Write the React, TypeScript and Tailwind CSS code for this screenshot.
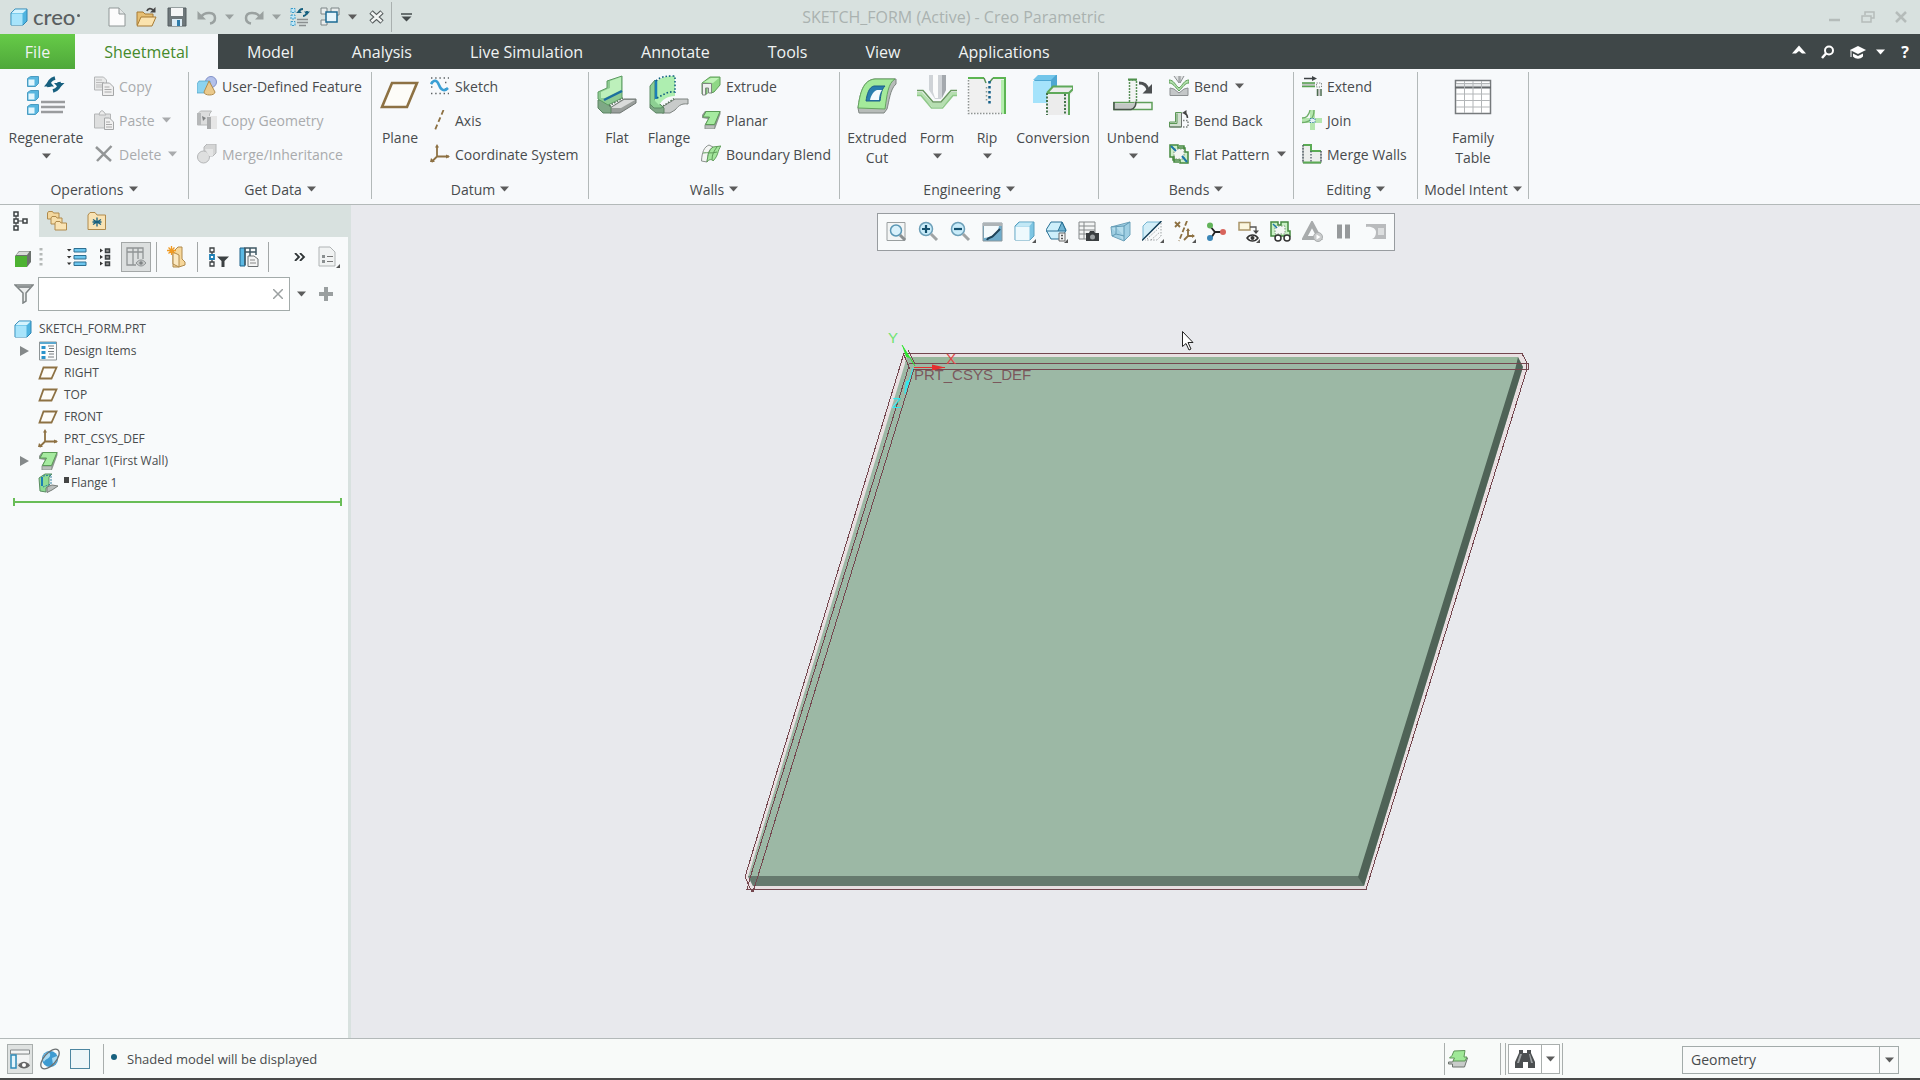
import React from 'react';

type IconProps = { className?: string };

const Svg: React.FC<{ w: number; h?: number; className?: string; children: React.ReactNode }> = ({ w, h = w, className = '', children }) => (
  <svg width={w} height={h} viewBox={`0 0 ${w} ${h}`} className={`shrink-0 ${className}`} fill="none" aria-hidden="true">
    {children}
  </svg>
);

const Caret: React.FC<IconProps> = ({ className = 'text-[#5c5c5c]' }) => (
  <Svg w={9} h={6} className={className}>
    <path d="M0 0.500h9L4.500 5.500z" fill="currentColor" />
  </Svg>
);

/* ---------- Shared shapes ---------- */

const CubeIcon: React.FC = () => (
  <Svg w={18}>
    <path d="M1 5l4-4h12v12l-4 4H1z" fill="#4fb4e0" stroke="#2e86b4" />
    <path d="M1.500 5.500h11V17h-11z" fill="#a8e4fb" />
    <path d="M1.500 5L5 1.500h11.500L13 5z" fill="#d5f3fd" />
  </Svg>
);

const PlaneIcon: React.FC = () => (
  <Svg w={20}>
    <path d="M5.500 4.500h13l-5 11h-12z" fill="#fdfcf8" stroke="#8d7143" strokeWidth="1.800" />
  </Svg>
);

const CsysIcon: React.FC = () => (
  <Svg w={20}>
    <path d="M7 2v10.500h12M7 12.500L1.500 18" stroke="#8d7143" strokeWidth="1.800" />
    <path d="M5 3.500L7 0l2 3.500zM16 10.500l4 2-4 2zM1 14l4 4H0z" fill="#8d7143" />
  </Svg>
);

const PlanarIcon: React.FC = () => (
  <Svg w={20}>
    <path d="M1 8V5l3-4h15.500v3L14 19H3.500v-4L7 9z" fill="#8d9690" />
    <path d="M2 7l3-5.500h14L13.500 14.500h-9L8.500 7z" fill="#a6eba0" stroke="#5a9c56" />
    <path d="M4.500 15.500h9l-.5 3H4.500z" fill="#babfbb" />
  </Svg>
);

const FlangeSmallIcon: React.FC = () => (
  <Svg w={20}>
    <path d="M1 5l6-4h7l-3 3v9l-3 2v4L2 18z" fill="#8fdc95" stroke="#5a8d62" />
    <path d="M4 4v9" stroke="#1d7fb5" strokeWidth="2" />
    <path d="M5 3l8-1v9l-8 3" stroke="#2e7f9d" strokeDasharray="2 1" />
    <path d="M9 14l5-2 6 1-6 4-5 2.500z" fill="#b9bdbb" stroke="#777d79" />
  </Svg>
);

/* ---------- Title bar icons ---------- */

const NewIcon = () => (
  <Svg w={18} h={20}>
    <path d="M1 1h10l6 6v12H1z" fill="#fcfcfc" stroke="#8f9696" />
    <path d="M11 1v6h6" fill="#e4e7e7" stroke="#8f9696" />
  </Svg>
);

const OpenIcon = () => (
  <Svg w={21} h={20}>
    <path d="M1 18V5h6l2 2h8v4" fill="#e6bf73" stroke="#a77b34" />
    <path d="M1 19l4-9h15l-4 9z" fill="#fbe3ae" stroke="#a77b34" />
    <path d="M11 4c1-3 4-3 6-1" stroke="#444" strokeWidth="1.800" />
    <path d="M19.500 0v5.500H14z" fill="#444" />
  </Svg>
);

const SaveIcon = () => (
  <Svg w={20}>
    <path d="M1 1h18v18H1z" fill="#6f787b" stroke="#555d60" />
    <path d="M4 1h12v8H4z" fill="#f5f6f6" />
    <path d="M5 12h10v7H5z" fill="#dcecf5" />
    <path d="M10 13h3v6h-3z" fill="#2f7dab" />
  </Svg>
);

const UndoIcon: React.FC<{ flip?: boolean }> = ({ flip }) => (
  <Svg w={20} h={16} className={flip ? '-scale-x-100' : ''}>
    <path d="M4 8c4-6 14-5 14 1 0 3-2 5-5 5.500" stroke="#9aa1a0" strokeWidth="2.500" />
    <path d="M0.500 2v8.500H9z" fill="#9aa1a0" />
  </Svg>
);

const RegenSmallIcon = () => (
  <Svg w={20}>
    <path d="M1 1.500h4v4H1zM1 8h4v4H1zM1 14.500h4v4H1z" fill="#bfe8fa" stroke="#3d9cc8" strokeDasharray="2 1" />
    <path d="M9 6c0-3 2-4 4-4M17 4c0 3-2 5-4 5" stroke="#17607f" strokeWidth="2" />
    <path d="M6 6h6L9 3zM14 4.500h6l-3 3.500z" fill="#17607f" />
    <path d="M7 12.500h11M7 15.500h11M9 18.500h7" stroke="#8a8f90" strokeWidth="1.500" />
  </Svg>
);

const WindowsIcon = () => (
  <Svg w={20}>
    <path d="M1 1h6v6H1zM11 1h8v7h-8zM1 13h6v5H1z" fill="#e9eded" stroke="#7d8586" />
    <path d="M6 5h11v10H6z" fill="#e6f5fc" stroke="#1b6a93" strokeWidth="1.500" />
  </Svg>
);

/* ---------- Large ribbon icons ---------- */

const RegenerateIcon = () => (
  <Svg w={40}>
    {[0, 14, 28].map((y) => (
      <g key={y}>
        <path d={`M1.500 ${y + 3.500}l3-2h8v7l-3 3h-8z`} fill="#58b6df" stroke="#4a9cc2" />
        <path d={`M2.500 ${y + 4.500}h6v6h-6z`} fill="#e3f6fd" />
      </g>
    ))}
    <path d="M23 12c-1-5 2-8 6-9M33 7c1 5-2 8-6 9" stroke="#17607f" strokeWidth="3.500" />
    <path d="M18 11.500h10l-5-6zM28 8h10.500L33 13.500z" fill="#17607f" />
    <path d="M15 27h24M15 32h24M15 37h22" stroke="#9a9c9e" strokeWidth="2.500" />
  </Svg>
);

const PlaneLargeIcon = () => (
  <Svg w={40}>
    <path d="M12 8h25L27 32H2z" fill="#fdfcf8" stroke="#8d7143" strokeWidth="2.600" />
  </Svg>
);

const FlatIcon = () => (
  <Svg w={40}>
    <path d="M13 33l14-9h12v4L23 38H13z" fill="#9a9f9c" stroke="#6f7672" />
    <path d="M14 33l13-8h11l-14 8z" fill="#d9dbda" />
    <path d="M1 25h9l4 7v6H6l-5-5z" fill="#7fa886" stroke="#5c8463" />
    <path d="M1 24v-7l9-4V6l15-5v22L11 30z" fill="#8ecb92" stroke="#5d9b62" />
    <path d="M4 23v-6l9-4V6l11-4v13L8 23z" fill="#bdf0bb" />
    <path d="M7 25l18-9" stroke="#1b6fa0" strokeWidth="2.500" />
    <path d="M12 31l14-8" stroke="#58755d" strokeDasharray="1.500 1.500" strokeWidth="1.500" />
  </Svg>
);

const FlangeIcon = () => (
  <Svg w={40}>
    <path d="M13 32l10-6 3-2h13v5c-8-1-10 3-13 6l-5 3h-8z" fill="#c8cbca" stroke="#7d8380" />
    <path d="M1 29h10l4 4v5H7l-6-5z" fill="#7fa886" stroke="#5c8463" />
    <path d="M1 29V11l5-6v20l8 7-2 1H5z" fill="#8dcf92" stroke="#5d8d64" />
    <path d="M6 8C11 2 18 1 26 1v20c-8 0-13 4-16 9l-4-4z" fill="#aeeeb0" />
    <path d="M7 5v19" stroke="#1b7fb8" strokeWidth="2.500" />
    <path d="M7 6C12 1 18 1 26 1v16c-7-1-12 3-18 6" stroke="#136181" strokeWidth="1.600" strokeDasharray="1.600 2" />
    <path d="M14 31l12-8" stroke="#58755d" strokeDasharray="1.500 1.500" strokeWidth="1.500" />
  </Svg>
);

const ExtrudedCutIcon = () => (
  <Svg w={40}>
    <path d="M1 33C3 18 6 5 18 4h21v5C33 14 32 27 30 34l-3 4H2z" fill="#b7bcb9" stroke="#7f8682" />
    <path d="M1 33C3 18 6 5 18 4h20C31 8 30 20 28 34z" fill="#a4ea9b" stroke="#64a45f" />
    <path d="M9 26c1-7 3-14 8-15h11c-4 4-4 9-5 15z" fill="#2a7ead" stroke="#1c5f87" />
    <path d="M13 25c1-5 4-9 7-10h5c-2 3-3 6-3 10z" fill="#f5fafc" />
  </Svg>
);

const FormIcon = () => (
  <Svg w={40}>
    <path d="M12 0h17v15l-5 9h-6l-6-9z" fill="#cfd3d7" />
    <path d="M16 0h5v23h-3l-2-6z" fill="#fbfcfc" />
    <path d="M25 0h4v15l-4 8z" fill="#a4a9ae" />
    <path d="M0 17h5l11 11h8l10-11h6v4h-4L25 32H15L4 21H0z" fill="#b6dfb1" />
    <path d="M0 15.500h6L16 27h8l10-11.500h6" stroke="#69985f" strokeWidth="1.500" />
    <path d="M0 20.500h4L14.500 33h11L36 20.500h4" stroke="#8fc989" strokeWidth="1.500" />
  </Svg>
);

const RipIcon = () => (
  <Svg w={40}>
    <path d="M2 4h16l3 6 4-6h13v34H2z" fill="#f0f0f0" />
    <path d="M1 3h16M26 3h12v36" stroke="#5cb552" strokeWidth="2" />
    <path d="M35.500 5v34" stroke="#b5eeae" strokeWidth="3" />
    <path d="M1.500 5v33.500H35" stroke="#8f9492" strokeDasharray="1.500 1.500" strokeWidth="1.500" />
    <path d="M17 3l2 5M26 3l-4 5" stroke="#5a9058" strokeWidth="1.500" />
    <path d="M22.500 6v24" stroke="#135f88" strokeWidth="2.500" strokeDasharray="2.500 2.500" />
    <path d="M19.500 12v15" stroke="#8a9a90" strokeWidth="1.500" strokeDasharray="1.500 2.500" />
  </Svg>
);

const ConversionIcon = () => (
  <Svg w={40}>
    <path d="M0 7l6-7h18v22l-6 6H0z" fill="#4ea7d2" />
    <path d="M0 6h18v22H0z" fill="#a5e3fb" />
    <path d="M0 5l5-5h18l-5 5z" fill="#73c6ea" />
    <path d="M14 18l6-7h20v6l-4 4v19H14z" fill="#ececec" />
    <path d="M14 18h22M14 18l6-6.500h20M40 11v3l-4 4" stroke="#5fa95a" strokeWidth="2" />
    <path d="M14 18v22M32 19v21" stroke="#44734a" strokeWidth="2" strokeDasharray="2 1.500" />
    <path d="M36 18v22" stroke="#5fa95a" strokeWidth="2" />
  </Svg>
);

const UnbendIcon = () => (
  <Svg w={40}>
    <path d="M1 27.500h38v7H1z" fill="#f3f5f4" stroke="#5f9f5a" strokeWidth="1.500" />
    <path d="M1 28.500h19l3-2-3 8H1z" fill="#c3c7c5" />
    <path d="M1 27v7.500h17c4-1 5-4 5-8" stroke="#465448" strokeWidth="1.500" />
    <path d="M16.500 27V5h7v21" stroke="#5a9158" strokeWidth="1.500" strokeDasharray="2 1" fill="#f3f4f4" />
    <path d="M15 4.500h9" stroke="#4f914c" strokeWidth="2" />
    <path d="M26 8c5 0 8 2 9 7" stroke="#4d5052" strokeWidth="3" />
    <path d="M29.500 18.500h9.500V9z" fill="#4d5052" />
  </Svg>
);

const FamilyTableIcon = () => (
  <Svg w={40}>
    <path d="M2.500 5.500h35v33h-35z" fill="#fff" stroke="#767a7c" strokeWidth="1.500" />
    <path d="M3 9h34v3H3z" fill="#e7e9ea" />
    <path d="M2 12.500h36" stroke="#65696b" strokeWidth="2" />
    <path d="M3 8.500h34M11.500 6v32M20 6v32M28.500 6v32M3 19h34M3 25.500h34M3 32h34" stroke="#b3b6b8" />
  </Svg>
);

/* ---------- Small ribbon icons ---------- */

const CopyIcon = () => (
  <Svg w={20}>
    <path d="M0.500 1h9l3 3v10h-12z" fill="#e9eaea" stroke="#b4b6b7" />
    <path d="M2 4h6M2 6.500h8M2 9h6M2 11h6" stroke="#bbb" />
    <path d="M8.500 7h7l4 4v8.500h-11z" fill="#efefef" stroke="#a5a7a8" />
    <path d="M10.500 11h5M10.500 13.500h7M10.500 16h7" stroke="#aaa" />
  </Svg>
);

const PasteIcon = () => (
  <Svg w={20}>
    <path d="M0.500 4h16v14h-16z" fill="#dedfdf" stroke="#b4b6b7" />
    <path d="M5 5l1-3 2-1.500L10 2l2 3z" fill="#ececec" stroke="#b4b6b7" />
    <path d="M10.500 8h5l4 4v7.500h-9z" fill="#f1f1f1" stroke="#a5a7a8" />
    <path d="M12 12h4M12 14.500h6M12 17h6" stroke="#aaa" />
  </Svg>
);

const DeleteIcon = () => (
  <Svg w={20}>
    <path d="M2 3l15 14M17.500 2L3 17" stroke="#939697" strokeWidth="2.500" />
  </Svg>
);

const UdfIcon = () => (
  <Svg w={20}>
    <circle cx="14" cy="6" r="5.500" fill="#b3c1ea" stroke="#8090c8" />
    <path d="M0 8l2-3h11v9l-2 3H0z" fill="#8cd3ef" stroke="#4ca0c4" strokeWidth=".7" />
    <path d="M12 5l6 11c0 4-11 4-11 0z" fill="#eac98b" stroke="#b28d4e" />
  </Svg>
);

const CopyGeomIcon = () => (
  <Svg w={20}>
    <path d="M0.500 4l3-3h11l-2 3v11h-12z" fill="#dcdddd" stroke="#b6b8b8" />
    <path d="M0 3h4v12H0z" fill="#b6b8b9" />
    <path d="M5 6l4 2-3 3z" fill="#7f8283" />
    <path d="M10 8l2-2h8v13h-9z" fill="#e6e6e6" />
    <path d="M10 7h4v12h-4z" fill="#a9abac" />
  </Svg>
);

const MergeIcon = () => (
  <Svg w={20}>
    <path d="M7 3l3-3h9v9l-3 3H7z" fill="#d4d5d5" stroke="#b4b6b7" />
    <circle cx="6.500" cy="13" r="6" fill="#dedfdf" stroke="#b4b6b7" />
    <path d="M8 5h8v7h-4z" fill="#e4e5e5" />
  </Svg>
);

const SketchIcon = () => (
  <Svg w={20}>
    <path d="M1 2h18M1 6.500h4M15 6.500h4M1 11h4M15 13h4M1 17.500h18" stroke="#5d6264" strokeWidth="1.400" strokeDasharray="1.400 2.800" />
    <path d="M1 8c3-5 6-4 8 1s5 7 9 3" stroke="#3a9fd4" strokeWidth="2.600" />
  </Svg>
);

const AxisIcon = () => (
  <Svg w={20}>
    <path d="M13.500 0L5 20" stroke="#8d7143" strokeWidth="1.800" strokeDasharray="5 3" />
  </Svg>
);

const ExtrudeIcon = () => (
  <Svg w={20}>
    <path d="M1 7l8-6h10v8l-6 7-3 1V10H6v8H1z" fill="#8fd886" stroke="#5f9c59" />
    <path d="M3 6l7-4h8l-6 5z" fill="#c0f3b8" />
    <path d="M1.500 7.500h9V17h-3v-5h-3v7h-3z" fill="#eef0ee" stroke="#7e8780" />
  </Svg>
);

const BlendIcon = () => (
  <Svg w={20}>
    <path d="M0.500 17C1 8 3 3 8 1l4 2c-5 3-5 8-6 15z" fill="#f4f6f4" stroke="#8b918d" />
    <path d="M6 18c1-8 2-12 6-15l8-1c-4 5-2 9-8 15-1-2-4-2-6 1z" fill="#a4e69d" stroke="#5f9c59" />
    <path d="M2 9c5-1 8 1 14-1M11 16c0-6 2-9 5-13" stroke="#5f9c59" />
  </Svg>
);

const BendIcon = () => (
  <Svg w={20}>
    <path d="M5 0l5 7V0M11 0v7l4-7" stroke="#8b8f91" fill="#dfe1e2" />
    <path d="M0 4c5 0 6 5 10 8 4-3 5-8 10-8v3c-4 0-6 4-10 8C6 11 4 7 0 7z" fill="#b2e2ad" stroke="#5d9c57" />
    <path d="M1 12l4 1 5 4 5-4 4-1v7.500H1z" fill="#c4c7c8" stroke="#8b8f91" />
  </Svg>
);

const BendBackIcon = () => (
  <Svg w={20}>
    <path d="M0.500 12h6V2.500h6V17h-12z" fill="#d3e0d2" stroke="#5c9857" />
    <path d="M0.500 13.500h7.500v-10" stroke="#5c9857" />
    <path d="M0.500 17h12V3" stroke="#696f6b" />
    <path d="M14 10.500h5V17h-5" stroke="#7b807d" strokeDasharray="1.500 1.500" strokeWidth="1.500" />
    <path d="M18.500 8c0-3-1-4-3-5" stroke="#444" strokeWidth="1.500" />
    <path d="M13 3l4.500-3v5z" fill="#444" />
  </Svg>
);

const FlatPatternIcon = () => (
  <Svg w={20}>
    <path d="M1 1h8v3h7v4h3v11h-8v-3H4v-3H1z" fill="#cdeeca" stroke="#44893f" strokeWidth="1.500" />
    <path d="M5 5h10v10H5z" fill="#f3f6f3" stroke="#789376" strokeDasharray="1.500 1.500" />
    <path d="M2 2l5 5M13 12l5 6" stroke="#1b76a8" strokeWidth="2" />
    <path d="M10 2h5v3M5 12v6h5" stroke="#44893f" strokeWidth="1.500" />
  </Svg>
);

const ExtendIcon = () => (
  <Svg w={20}>
    <path d="M2 2.500h10" stroke="#3e4345" strokeWidth="1.500" />
    <path d="M10 0l5 2.500L10 5z" fill="#3e4345" />
    <path d="M0 8.500h13" stroke="#bfc3c1" strokeWidth="4" />
    <path d="M0 7h13M0 10.500h13" stroke="#58a452" strokeWidth="1.300" />
    <path d="M14.500 7h5v4h-5z" stroke="#7b807d" strokeDasharray="1.300 1.300" />
    <path d="M15 13h3v7h-3z" fill="#ccc" />
    <path d="M15.500 13v7M19 13v7" stroke="#4e6c50" strokeWidth="1.500" />
  </Svg>
);

const JoinIcon = () => (
  <Svg w={20}>
    <path d="M0 10.500h20" stroke="#b4e6ae" strokeWidth="5" />
    <path d="M10.500 0v20" stroke="#b4e6ae" strokeWidth="5" />
    <path d="M0 12.500c7 0 12-4 12-12.500M0 8c4 0 7-3 8-8" stroke="#6fae69" strokeWidth="1.300" />
    <path d="M8 8.500h5v4H8z" fill="#e3f1f7" stroke="#3b7fa5" strokeDasharray="1.300 1.300" />
  </Svg>
);

const MergeWallsIcon = () => (
  <Svg w={20}>
    <path d="M1 1h8v6h10v12H1z" fill="#eceeec" stroke="#8b918d" />
    <path d="M1 1h8v6h10M1 18.500h18" stroke="#5bab54" strokeWidth="2" />
    <path d="M9 7v11M1 1v17M19 7v11" stroke="#4e5a66" strokeDasharray="1.500 1.500" strokeWidth="1.300" />
  </Svg>
);

/* ---------- Ribbon building blocks ---------- */

const BigButton: React.FC<{ icon: React.ReactNode; label: string; second?: string; menu?: boolean; width: string }> = ({ icon, label, second, menu, width }) => (
  <button type="button" className={`flex flex-col items-center pt-[6px] ${width}`}>
    {icon}
    <span className="mt-[13px] leading-5 whitespace-nowrap">{label}</span>
    {second && <span className="leading-5">{second}</span>}
    {menu && <span className="flex h-4 items-center"><Caret /></span>}
  </button>
);

type SmallItem = { icon: React.ReactNode; label: string; menu?: boolean; off?: boolean };

const SmallColumn: React.FC<{ items: SmallItem[]; className?: string }> = ({ items, className = '' }) => (
  <div className={`flex flex-col items-start ${className}`}>
    {items.map((item) => (
      <button
        key={item.label}
        type="button"
        disabled={item.off}
        className="flex h-[34px] items-center gap-[5px] whitespace-nowrap disabled:text-[#a9abad]"
      >
        {item.icon}
        <span>{item.label}</span>
        {item.menu && <Caret className={item.off ? 'ml-[2px] text-[#a9abad]' : 'ml-[2px] text-[#5c5c5c]'} />}
      </button>
    ))}
  </div>
);

const Group: React.FC<{ title: string; width: string; children: React.ReactNode }> = ({ title, width, children }) => (
  <section className={`flex shrink-0 flex-col ${width}`} aria-label={title}>
    <div className="flex h-[107px]">{children}</div>
    <button type="button" className="flex h-[26px] items-center justify-center gap-[5px] whitespace-nowrap">
      {title} <Caret />
    </button>
  </section>
);

const Rule: React.FC = () => <span className="my-[3px] w-px shrink-0 bg-[#b3b9b9]" />;

const Ribbon: React.FC = () => (
  <div className="flex border-b border-[#b3b9b9] bg-[#f7f9fb] pb-[2px]">
    <Group title="Operations" width="w-[188px]">
      <BigButton icon={<RegenerateIcon />} label="Regenerate" menu width="w-[92px]" />
      <SmallColumn
        className="pl-[2px]"
        items={[
          { icon: <CopyIcon />, label: 'Copy', off: true },
          { icon: <PasteIcon />, label: 'Paste', menu: true, off: true },
          { icon: <DeleteIcon />, label: 'Delete', menu: true, off: true },
        ]}
      />
    </Group>
    <Rule />
    <Group title="Get Data" width="w-[182px]">
      <SmallColumn
        className="pl-2"
        items={[
          { icon: <UdfIcon />, label: 'User-Defined Feature' },
          { icon: <CopyGeomIcon />, label: 'Copy Geometry', off: true },
          { icon: <MergeIcon />, label: 'Merge/Inheritance', off: true },
        ]}
      />
    </Group>
    <Rule />
    <Group title="Datum" width="w-[216px]">
      <BigButton icon={<PlaneLargeIcon />} label="Plane" width="w-[56px]" />
      <SmallColumn
        className="pl-[2px]"
        items={[
          { icon: <SketchIcon />, label: 'Sketch' },
          { icon: <AxisIcon />, label: 'Axis' },
          { icon: <CsysIcon />, label: 'Coordinate System' },
        ]}
      />
    </Group>
    <Rule />
    <Group title="Walls" width="w-[250px]">
      <BigButton icon={<FlatIcon />} label="Flat" width="w-[56px]" />
      <BigButton icon={<FlangeIcon />} label="Flange" width="w-[48px]" />
      <SmallColumn
        className="pl-2"
        items={[
          { icon: <ExtrudeIcon />, label: 'Extrude' },
          { icon: <PlanarIcon />, label: 'Planar' },
          { icon: <BlendIcon />, label: 'Boundary Blend' },
        ]}
      />
    </Group>
    <Rule />
    <Group title="Engineering" width="w-[258px]">
      <BigButton icon={<ExtrudedCutIcon />} label="Extruded" second="Cut" width="w-[74px]" />
      <BigButton icon={<FormIcon />} label="Form" menu width="w-[46px]" />
      <BigButton icon={<RipIcon />} label="Rip" menu width="w-[54px]" />
      <BigButton icon={<ConversionIcon />} label="Conversion" width="w-[78px]" />
    </Group>
    <Rule />
    <Group title="Bends" width="w-[194px]">
      <BigButton icon={<UnbendIcon />} label="Unbend" menu width="w-[68px]" />
      <SmallColumn
        className="pl-[2px]"
        items={[
          { icon: <BendIcon />, label: 'Bend', menu: true },
          { icon: <BendBackIcon />, label: 'Bend Back' },
          { icon: <FlatPatternIcon />, label: 'Flat Pattern', menu: true },
        ]}
      />
    </Group>
    <Rule />
    <Group title="Editing" width="w-[123px]">
      <SmallColumn
        className="pl-2"
        items={[
          { icon: <ExtendIcon />, label: 'Extend' },
          { icon: <JoinIcon />, label: 'Join' },
          { icon: <MergeWallsIcon />, label: 'Merge Walls' },
        ]}
      />
    </Group>
    <Rule />
    <Group title="Model Intent" width="w-[110px]">
      <BigButton icon={<FamilyTableIcon />} label="Family" second="Table" width="w-[110px]" />
    </Group>
    <Rule />
  </div>
);

/* ---------- Title bar and tabs ---------- */

const TitleBar: React.FC = () => (
  <header className="flex h-[34px] items-center bg-[#d8e1df]">
    <div className="flex flex-1 items-center">
      <div className="flex w-[108px] items-center gap-[5px] pl-[10px]">
        <CubeIcon />
        <span className="flex font-['Lato',sans-serif] text-[22px] leading-6 font-medium text-[#5a5f61]">
          creo<span className="mt-[9px] ml-[2px] h-[3px] w-[3px] rounded-full bg-[#5a5f61]" />
        </span>
      </div>
      <button type="button" aria-label="New"><NewIcon /></button>
      <button type="button" aria-label="Open" className="ml-[10px]"><OpenIcon /></button>
      <button type="button" aria-label="Save" className="ml-[10px]"><SaveIcon /></button>
      <button type="button" aria-label="Undo" className="ml-[10px]"><UndoIcon /></button>
      <button type="button" aria-label="Undo list" className="ml-2"><Caret className="text-[#9aa1a0]" /></button>
      <button type="button" aria-label="Redo" className="ml-[10px]"><UndoIcon flip /></button>
      <button type="button" aria-label="Redo list" className="ml-2"><Caret className="text-[#9aa1a0]" /></button>
      <button type="button" aria-label="Regenerate" className="ml-[9px]"><RegenSmallIcon /></button>
      <button type="button" aria-label="Windows" className="ml-[10px]"><WindowsIcon /></button>
      <button type="button" aria-label="Window list" className="ml-2"><Caret /></button>
      <button type="button" aria-label="Close window" className="ml-3">
        <Svg w={16} h={14}>
          <path d="M2 2l11 10M13 2L2 12" stroke="#555b5c" strokeWidth="5" />
          <path d="M2.500 2.500l10 9M12.500 2.500l-10 9" stroke="#f2f5f4" strokeWidth="2.500" />
        </Svg>
      </button>
      <span className="ml-[6px] h-[30px] w-px bg-[#a9b0af]" />
      <button type="button" aria-label="Customize" className="ml-[9px]">
        <Svg w={12} h={9}>
          <path d="M0 1h11" stroke="#454b4c" strokeWidth="1.500" />
          <path d="M0.500 3.500h10l-5 5z" fill="#454b4c" />
        </Svg>
      </button>
    </div>
    <h1 className="text-[16px] text-[#aab2b0]">SKETCH_FORM (Active) - Creo Parametric</h1>
    <div className="flex flex-1 items-center justify-end gap-5 pr-[13px] text-[#b5bcba]">
      <button type="button" aria-label="Minimize">
        <Svg w={12}><path d="M0 9h11" stroke="currentColor" strokeWidth="2.500" /></Svg>
      </button>
      <button type="button" aria-label="Restore">
        <Svg w={14} h={12}>
          <path d="M4 4V1h9v6h-3M1 5h9v6H1z" stroke="currentColor" strokeWidth="1.500" />
        </Svg>
      </button>
      <button type="button" aria-label="Close">
        <Svg w={12}><path d="M1 1l10 10M11 1L1 11" stroke="currentColor" strokeWidth="2.500" /></Svg>
      </button>
    </div>
  </header>
);

const tabs = ['Model', 'Analysis', 'Live Simulation', 'Annotate', 'Tools', 'View', 'Applications'];

const TabBar: React.FC = () => (
  <nav className="flex h-[35px] items-stretch bg-[#3f4748] text-[16px] text-[#f0f3f3]">
    <button type="button" className="w-[75px] bg-linear-to-b from-[#66cb48] to-[#4fa83a]">File</button>
    <button type="button" className="w-[143px] bg-[#f7f9fb] text-[#458a2c]">Sheetmetal</button>
    {tabs.map((tab) => (
      <button key={tab} type="button" className="px-[29px]">{tab}</button>
    ))}
    <div className="ml-auto flex items-center pr-[9px] text-white">
      <button type="button" aria-label="Collapse ribbon" className="mb-[5px]">
        <Svg w={14} h={9}><path d="M0 8.500l7-8 7 8h-4L7 6 4 8.500z" fill="currentColor" /></Svg>
      </button>
      <button type="button" aria-label="Search commands" className="ml-[15px]">
        <Svg w={14}>
          <circle cx="8" cy="5.500" r="4" stroke="currentColor" strokeWidth="2" />
          <path d="M5 8.500L1 13" stroke="currentColor" strokeWidth="2.500" />
        </Svg>
      </button>
      <button type="button" aria-label="Learning" className="ml-[15px] flex items-center gap-[10px]">
        <Svg w={16} h={14}>
          <path d="M0 5l8-4 8 4-8 4z" fill="currentColor" />
          <path d="M3 8.500v3c3 3 7 3 10 0v-3l-5 2.500z" fill="currentColor" />
          <path d="M1 5v7" stroke="currentColor" />
        </Svg>
        <Caret className="text-white" />
      </button>
      <button type="button" aria-label="Help" className="ml-[14px] w-3 text-[16px] leading-5 font-bold">?</button>
    </div>
  </nav>
);

/* ---------- Model tree panel ---------- */

const FolderStar: React.FC = () => (
  <Svg w={20}>
    <path d="M1 18.500V4l2-2.500h5L10 4h8.500v14.500z" fill="#f9e3b4" stroke="#b08a4c" />
    <path d="M10 6.500v9M6 8.500l8 5M14 8.500l-8 5M5.500 11h9" stroke="#17607f" strokeWidth="1.300" />
  </Svg>
);

const Folders: React.FC = () => (
  <Svg w={20}>
    <path d="M0.500 8V2l1-1.500h4l1 1.500H12v6z" fill="#f3d79e" stroke="#b08a4c" />
    <path d="M4 13V7l1-1.500h4l1 1.500h5v6z" fill="#f6deab" stroke="#b08a4c" />
    <path d="M8 19v-7l1-1.500h4l1 1.500h5.500v7z" fill="#f9e3b4" stroke="#b08a4c" />
  </Svg>
);

const TreeToolbar: React.FC = () => (
  <div className="mt-[5px] flex h-[30px] items-center pl-[14px]">
    <button type="button" aria-label="Model display" className="mt-1">
      <Svg w={18}>
        <path d="M1 6l4-5h12v11l-4 5H1z" fill="#6b716d" />
        <path d="M2 5l3.500-3.500h10L13 5z" fill="#d8dbd9" />
        <path d="M1 6h12v11H1z" fill="#4db232" />
      </Svg>
    </button>
    <Svg w={4} h={20} className="ml-[7px]">
      <path d="M2 1v19" stroke="#b5b9b8" strokeWidth="3" strokeDasharray="2.500 2.500" />
    </Svg>
    <button type="button" aria-label="Expand list" className="ml-6">
      <Svg w={20}>
        <path d="M7 1.500h12v3.500H7zM7 8.500h12V12H7zM7 15h12v3.500H7z" fill="#6cc6ee" stroke="#2e6f91" />
        <path d="M0 2h4.500L2 4.500zM0 9h4.500L2 11.500zM0 15.500h4.500L2 18z" fill="#333" />
      </Svg>
    </button>
    <button type="button" aria-label="Collapse list" className="ml-3">
      <Svg w={12} h={20}>
        <path d="M6.500 2h4v3.500h-4zM6.500 8.500h4V12h-4zM6.500 15h4v3.500h-4z" fill="#999" stroke="#3c4143" strokeWidth="1.500" />
        <path d="M1 1.500l3 2-3 2zM1 8l3 2-3 2zM1 14.500l3 2-3 2z" fill="#333" />
      </Svg>
    </button>
    <button type="button" aria-label="Tree columns" className="ml-[10px] flex h-[30px] w-[30px] items-center justify-center border border-[#a3a7a7] bg-[#dcdfdf]">
      <Svg w={20}>
        <path d="M1 1h16v4H1zM1 5v13h6V1M7 18h3M12 1v11M17 5v7" stroke="#909495" strokeWidth="1.300" />
        <path d="M10 16c3-4 7-4 10 0-3 4-7 4-10 0z" fill="#c4c7c7" stroke="#909495" />
        <circle cx="15" cy="16" r="1.800" fill="#808485" />
      </Svg>
    </button>
    <span className="ml-[5px] h-[30px] w-px bg-[#a3a7a7]" />
    <button type="button" aria-label="New folder" className="ml-[10px]">
      <Svg w={20} h={22}>
        <path d="M6 6l5-5h4v12l3 3v3l-6 2H6z" fill="#f6d79b" stroke="#b08a4c" />
        <path d="M6 6l6 3v12l-6-3z" fill="#fbe9c3" stroke="#b08a4c" />
        <path d="M4.500 0v9M0 4.500h9M1.500 1.500l6 6M7.500 1.500l-6 6" stroke="#f09a23" strokeWidth="1.300" />
      </Svg>
    </button>
    <span className="ml-[10px] h-[30px] w-px bg-[#a3a7a7]" />
    <button type="button" aria-label="Tree filters" className="ml-[11px]">
      <Svg w={20}>
        <path d="M1 1h4v4H1zM1 15h4v4H1zM3 5v10" stroke="#3c4143" strokeWidth="1.300" />
        <path d="M1 8h4v4H1z" fill="#fff" stroke="#1d7fb5" strokeWidth="1.800" />
        <path d="M8 9.500h12l-4.500 4.500v6h-3v-6z" fill="#3c4143" />
      </Svg>
    </button>
    <button type="button" aria-label="Column display" className="ml-[10px]">
      <Svg w={20}>
        <path d="M1 1h5v18H1z" fill="#5bb9e4" stroke="#1c6188" />
        <path d="M6 1h11v4H6zM6 5v13M11 1v8M17 1v7" stroke="#3f5864" strokeWidth="1.500" />
        <path d="M9 9h6l4 3v7.500H9z" fill="#f3f4f4" stroke="#6b7072" />
        <path d="M11 13h5M11 16h6" stroke="#888" />
      </Svg>
    </button>
    <span className="ml-[9px] h-[30px] w-px bg-[#a3a7a7]" />
    <button type="button" aria-label="More tools" className="ml-auto">
      <Svg w={12} h={8}><path d="M1 0l4 4-4 4M6 0l4 4-4 4" stroke="#2f3436" strokeWidth="1.800" /></Svg>
    </button>
    <button type="button" aria-label="Settings" className="mr-2 ml-3">
      <Svg w={22}>
        <path d="M1 1h11l5 5v14H1z" fill="#f1f3f3" stroke="#b0b4b5" />
        <path d="M4 9h3v3H4zM4 14h3v3H4z" fill="#8b9091" />
        <path d="M9 10.500h6M9 15.500h6" stroke="#777" />
        <path d="M22 18v4h-4z" fill="#555" />
      </Svg>
    </button>
  </div>
);

const DesignItemsIcon: React.FC = () => (
  <Svg w={20}>
    <path d="M1.500 1h17v18h-17z" fill="#fbfcfc" stroke="#8d9496" />
    <path d="M2 2h16" stroke="#5aa8cf" strokeWidth="2" />
    <path d="M3.500 5h4v3h-4zM3.500 10h4v3h-4zM3.500 15h4v3h-4z" fill="#2a93cb" />
    <path d="M10 5h6M11 7.500h5M10 10.500h6M11 13h5M10 16h6" stroke="#777d80" />
  </Svg>
);

type TreeNode = { icon: React.ReactNode; label: string; expand?: boolean; pending?: boolean };

const nodes: TreeNode[] = [
  { icon: <DesignItemsIcon />, label: 'Design Items', expand: true },
  { icon: <PlaneIcon />, label: 'RIGHT' },
  { icon: <PlaneIcon />, label: 'TOP' },
  { icon: <PlaneIcon />, label: 'FRONT' },
  { icon: <CsysIcon />, label: 'PRT_CSYS_DEF' },
  { icon: <PlanarIcon />, label: 'Planar 1(First Wall)', expand: true },
  { icon: <FlangeSmallIcon />, label: 'Flange 1', pending: true },
];

const ModelTree: React.FC = () => (
  <aside className="flex w-[351px] shrink-0 flex-col border-r-3 border-[#d8e1df] bg-[#f8fafb]">
    <div className="-mr-[3px] flex h-8 bg-[#d8e1df]">
      <button type="button" aria-label="Model tree" className="flex w-[39px] items-center justify-end bg-[#f8fafb] pr-[10px]">
        <Svg w={16} h={20}>
          <path d="M1 1h4v4H1zM1 8h4v4H1zM1 15h4v4H1zM10 8h4v4h-4z" stroke="#3c4143" strokeWidth="1.500" />
          <path d="M3 5v3M3 12v3M5 10h5" stroke="#3c4143" />
        </Svg>
      </button>
      <button type="button" aria-label="Folder browser" className="ml-2"><Folders /></button>
      <button type="button" aria-label="Favorites" className="ml-5"><FolderStar /></button>
    </div>
    <TreeToolbar />
    <div className="mt-[5px] flex h-[34px] items-center pl-[14px]">
      <Svg w={20}>
        <path d="M1 1h18l-7 8v8l-3 2V9z" fill="#eceeee" stroke="#7c8283" strokeWidth="1.500" />
        <path d="M2 2h16l-2 2H4z" fill="#8d9293" />
      </Svg>
      <div className="ml-1 flex h-[34px] w-[252px] items-center border border-[#a3abaa] bg-white pr-[6px]">
        <input type="text" aria-label="Filter tree" className="h-full min-w-0 flex-1 px-2 outline-none" />
        <button type="button" aria-label="Clear filter">
          <Svg w={10}><path d="M0 0l10 10M10 0L0 10" stroke="#9ba0a1" strokeWidth="1.500" /></Svg>
        </button>
      </div>
      <button type="button" aria-label="Filter options" className="ml-[7px]"><Caret /></button>
      <button type="button" aria-label="Add filter" className="ml-[13px]">
        <Svg w={14}><path d="M7 0v14M0 7h14" stroke="#9a9fa0" strokeWidth="4" /></Svg>
      </button>
    </div>
    <ul className="mt-[7px] text-[12px] leading-[22px]">
      <li className="flex h-[22px] items-center gap-[7px] pl-[14px]">
        <CubeIcon /> SKETCH_FORM.PRT
      </li>
      {nodes.map((node) => (
        <li key={node.label} className="flex h-[22px] items-center pl-5">
          <span className="w-[18px]">
            {node.expand && <Svg w={9} h={12}><path d="M0 1l9 5-9 5z" fill="#85898a" /></Svg>}
          </span>
          {node.icon}
          <span className="ml-[6px] flex">
            {node.pending && <span className="mt-[5px] mr-[2px] h-[6px] w-[5px] bg-[#444]" />}
            {node.label}
          </span>
        </li>
      ))}
    </ul>
    <div className="mr-[6px] ml-[13px] mt-1 flex h-2 items-center border-x-2 border-[#69bd57]">
      <span className="h-[2px] w-full bg-[#69bd57]" />
    </div>
  </aside>
);

/* ---------- Graphics area ---------- */

const Corner = () => <path d="M22 18v4h-4z" fill="#555" />;

const viewTools: { label: string; art: React.ReactNode }[] = [
  {
    label: 'Refit',
    art: (
      <>
        <path d="M1 1.500h18v18H1z" fill="#f3f5f5" stroke="#9a9fa0" />
        <circle cx="10" cy="9.500" r="5.500" fill="#d9f1fb" stroke="#5a97b5" strokeWidth="1.500" />
        <path d="M14 14l5 5" stroke="#8a8f91" strokeWidth="3" />
      </>
    ),
  },
  {
    label: 'Zoom in',
    art: (
      <>
        <circle cx="8" cy="8" r="6.500" fill="#c9ecfa" stroke="#6c9fb8" strokeWidth="1.500" />
        <path d="M8 4v8M4 8h8" stroke="#14506e" strokeWidth="2.200" />
        <path d="M13 13l6 6" stroke="#a0a4a5" strokeWidth="3" />
      </>
    ),
  },
  {
    label: 'Zoom out',
    art: (
      <>
        <circle cx="8" cy="8" r="6.500" fill="#c9ecfa" stroke="#6c9fb8" strokeWidth="1.500" />
        <path d="M4 8h8" stroke="#14506e" strokeWidth="2.200" />
        <path d="M13 13l6 6" stroke="#a0a4a5" strokeWidth="3" />
      </>
    ),
  },
  {
    label: 'Repaint',
    art: (
      <>
        <path d="M1 2h19v18H1z" fill="#6faccb" stroke="#8a969c" />
        <path d="M1 2h19v3H1z" fill="#aeb4b7" />
        <path d="M2 5h15c-1 7-6 11-15 12z" fill="#f4fafc" />
        <path d="M5 19c1-3 4-2 6-4l7-7" stroke="#1f4459" strokeWidth="2" />
      </>
    ),
  },
  {
    label: 'Display style',
    art: (
      <>
        <path d="M1 5l4-4h15v14l-4 4H1z" fill="#7cc5e3" stroke="#5a9fbd" />
        <path d="M1.500 5.500h14V19h-14z" fill="#eef9fd" />
        <path d="M2 5l3.500-3.500h13L15.500 5z" fill="#c2e8f6" />
        <Corner />
      </>
    ),
  },
  {
    label: 'Saved orientations',
    art: (
      <>
        <path d="M5 1h11l4 8-4 9H5L0 9z" fill="#cdeffb" stroke="#2a7195" />
        <path d="M16 1l4 9h-8zM0 10h12" fill="#6fb4d3" stroke="#2a7195" />
        <path d="M13 12h6v8h-6z" fill="#f4f5f5" stroke="#666" />
        <path d="M15 14.500h2M15 17.500h2" stroke="#555" strokeWidth="1.500" />
        <Corner />
      </>
    ),
  },
  {
    label: 'View manager',
    art: (
      <>
        <path d="M1 1h16v17H1zM1 5h16M1 9h16M1 13h8M6 1v17" fill="#f3f5f5" stroke="#85898a" />
        <path d="M8 12h3l1-2h4l1 2h4v8H8z" fill="#3a3e40" />
        <circle cx="14.500" cy="16" r="2.500" fill="#9ca1a3" />
      </>
    ),
  },
  {
    label: 'Perspective',
    art: (
      <>
        <path d="M1 6l19-5v13l-6 6-12-5z" fill="#9fcfe3" stroke="#6fa3bb" />
        <path d="M1 6l13-1v15M14 5l6-4M6 6v7l8 2M2 15l4-2" stroke="#5f99b4" fill="#c5e6f2" fillOpacity=".6" />
      </>
    ),
  },
  {
    label: 'Section',
    art: (
      <>
        <path d="M1 5l4-4h14L1 18z" fill="#d3eef8" stroke="#75b5d1" />
        <path d="M19 2v13l-4 4H3M5 18L18 6M9 19L18 11" stroke="#9da2a3" strokeDasharray="1.500 1.500" />
        <path d="M0 19.500L19.500 0" stroke="#173f57" strokeWidth="1.500" />
        <Corner />
      </>
    ),
  },
  {
    label: 'Datum display',
    art: (
      <>
        <path d="M1 1l5 5M6 1L1 6" stroke="#8d7143" strokeWidth="1.800" />
        <path d="M13 0L5 20" stroke="#8d7143" strokeWidth="1.800" strokeDasharray="5 2" />
        <path d="M14 8v7h6M14 15l-4 4" stroke="#8d7143" strokeWidth="1.800" />
        <path d="M12 10l2-3 2 3zM18 13l3 2-3 2z" fill="#8d7143" />
        <Corner />
      </>
    ),
  },
  {
    label: 'Spin center',
    art: (
      <>
        <path d="M4 5l5 6h7M9 11l-4 6" stroke="#222" strokeWidth="1.800" />
        <circle cx="4" cy="4.500" r="3" fill="#62b35a" />
        <circle cx="17" cy="11" r="3" fill="#d8645c" />
        <circle cx="4" cy="17" r="3" fill="#3a86b7" />
      </>
    ),
  },
  {
    label: 'Annotation display',
    art: (
      <>
        <path d="M1 1.500h11V9H1z" fill="#fbf6df" stroke="#a9956a" strokeWidth="1.500" />
        <path d="M12 6h6v4" stroke="#555" strokeWidth="1.300" />
        <path d="M15 9.500h6L18 13z" fill="#444" />
        <path d="M9 17c3-4 8-4 11 0-3 4-8 4-11 0z" fill="#fff" stroke="#333" strokeWidth="1.500" />
        <circle cx="14.500" cy="17" r="2" fill="#333" />
        <Corner />
      </>
    ),
  },
  {
    label: 'Flat pattern preview',
    art: (
      <>
        <path d="M1 1h7v3h3V1h7v9h2v5H1z" fill="#c9f0c4" stroke="#44893f" strokeWidth="1.500" />
        <path d="M5 5h10v8H5z" fill="#f3f6f3" stroke="#789376" strokeDasharray="1.500 1.500" />
        <path d="M3 3l4 4" stroke="#1b76a8" strokeWidth="1.500" />
        <circle cx="8" cy="17" r="3" fill="#fff" stroke="#333" strokeWidth="1.500" />
        <circle cx="17" cy="17" r="3" fill="#fff" stroke="#333" strokeWidth="1.500" />
      </>
    ),
  },
  {
    label: 'Simulation',
    art: (
      <>
        <path d="M10 3l7.500 14h-15z" stroke="#a8abac" strokeWidth="4" />
        <circle cx="16" cy="16" r="4.500" fill="#c9cbcc" stroke="#aaadae" />
        <path d="M14.500 13.500l4 2.500-4 2.500z" fill="#fff" />
      </>
    ),
  },
  { label: 'Pause', art: <path d="M3 3.500h5v14H3zM11 3.500h5v14h-5z" fill="#96999b" /> },
  {
    label: 'Playback',
    art: (
      <>
        <path d="M0 3h20v15H6c3-1 4-4 4-7S6 5 0 6z" fill="#b9bbbd" />
        <path d="M12 7h6v7h-6z" fill="#dcdedf" />
      </>
    ),
  },
];

const ViewToolbar: React.FC = () => (
  <div role="toolbar" className="mt-2 flex h-[38px] items-center gap-[10px] border border-[#989ca0] bg-[#f8fafb] pr-[6px] pl-2">
    {viewTools.map((tool) => (
      <button key={tool.label} type="button" aria-label={tool.label} title={tool.label}>
        <Svg w={22}>{tool.art}</Svg>
      </button>
    ))}
  </div>
);

const SheetModel: React.FC = () => (
  <svg viewBox="736 321 800 600" className="mt-[70px] h-[600px] w-[800px] shrink-0" fill="none" role="img" aria-label="Sheet metal part">
    {/* offset outline and wall faces */}
    <path d="M904 353H1522L1528 366L1367 889H748L745 877z" fill="#e9e0e2" />
    <path d="M907 357H1518L1523 367L1364 886H753L748 877z" fill="#9cb8a5" />
    <path d="M907 357H1518L1516 363H905z" fill="#97b79c" />
    <path d="M748 876H1361L1364 886H753z" fill="#667a6e" />
    <path d="M1518 357L1523 367L1364 886L1358 877L1515 370z" fill="#4f6357" />
    {/* wireframe */}
    <g stroke="#74474f" shapeRendering="crispEdges">
      <path d="M903 353.500H1522L1527 363M909 363.500H1528V369M914 369.500H1529M1526.500 363v6" />
      <path d="M904 353L745 877L752 892L755 886M909 366L750 878L747 889.500H1366L1527 369" />
      <path d="M914 369L753 892M903 353l7 16M908 350l7 14" />
    </g>
    {/* coordinate system */}
    <path d="M914 367.500H945" stroke="#e62e2e" />
    <path d="M932 364.500v6l13-3z" fill="#e62e2e" />
    <path d="M915 366L902 345" stroke="#2de52d" />
    <path d="M902 345l4 12 4 1z" fill="#2de52d" />
    <path d="M913 368L905 394" stroke="#2fe8f0" />
    <path d="M904 394l2-13 4-1z" fill="#2fe8f0" />
    <g className="font-['Liberation_Sans',sans-serif]">
      <text x="914" y="380" fontSize="15" fill="#74474f" fillOpacity=".85">PRT_CSYS_DEF</text>
      <text x="946" y="364" fontSize="15" fill="#e04848">X</text>
      <text x="888" y="343" fontSize="15" fill="#6fe36f">Y</text>
      <text x="892" y="408" fontSize="15" fill="#2fe8f0">Z</text>
    </g>
    {/* pointer */}
    <path d="M1182.500 331.500v15l3.500-3 3 6.500 2-1-3-6.500h5z" fill="#fff" stroke="#222" />
  </svg>
);

/* ---------- Status bar ---------- */

const StatusBar: React.FC = () => (
  <footer className="flex h-[42px] items-center border-t border-b-2 border-t-[#b3b9b9] border-b-[#4a4a4a] bg-[#f8faf9]">
    <button type="button" aria-label="Navigator" className="ml-[7px] flex h-[30px] w-[26px] items-center justify-center border border-[#a9aead] bg-[#dfe2e1]">
      <Svg w={20}>
        <path d="M0.500 1h19v4h-19z" fill="#f3f4f4" stroke="#85898a" />
        <path d="M7 6h12v8H7z" fill="#f3f4f4" />
        <path d="M1 6h5v13H1z" fill="#e3f4fb" stroke="#2f8bb8" strokeWidth="1.500" />
        <path d="M8 16.500c3-5 9-5 12 0-3 4-9 4-12 0z" fill="#666" />
        <circle cx="14" cy="16" r="2" fill="#fff" />
      </Svg>
    </button>
    <button type="button" aria-label="Web browser" className="ml-[6px]">
      <Svg w={22}>
        <circle cx="11" cy="11" r="8" fill="#3d9bd1" />
        <path d="M6 6c3-3 6-1 5 2s-5 3-6 6c-2-3-1-6 1-8zM13 10l5-2c1 4-1 8-4 9z" fill="#a9daf2" />
        <ellipse cx="11" cy="11" rx="12" ry="6" transform="rotate(-48 11 11)" stroke="#6b7072" strokeWidth="1.300" />
      </Svg>
    </button>
    <button type="button" aria-label="Full screen" className="ml-[9px] h-5 w-5 border border-[#4d86a1] bg-[#eef6f9]" />
    <span className="ml-[13px] h-[30px] w-px bg-[#a9aead]" />
    <span className="mb-[4px] ml-[7px] h-[6px] w-[6px] rounded-full bg-[#17607f]" />
    <p className="ml-[10px] text-[13px] leading-5">Shaded model will be displayed</p>
    <div className="ml-auto flex items-center">
      <span className="h-8 w-px bg-[#a9aead]" />
      <button type="button" aria-label="Regeneration status" className="ml-[3px]">
        <Svg w={20}>
          <path d="M0.500 13h4l2-3 13-1-3 9h-12v-3h-4z" fill="#c9ccca" stroke="#6c736e" />
          <path d="M6 2l11-.5L16 8h3l-2 4H5l1.500-3H1.500L4 6.500z" fill="#9fe897" stroke="#5f9559" />
        </Svg>
      </button>
      <span className="ml-8 h-8 w-px bg-[#a9aead]" />
      <span className="ml-1 h-8 w-px bg-[#a9aead]" />
      <div className="ml-[2px] flex h-[30px] border border-[#a9aead] bg-white">
        <button type="button" aria-label="Find" className="w-8 pl-[6px]">
          <Svg w={20}>
            <path d="M4 1h4v3h4V1h4v3l4 9v6h-7v-6H8v6H0v-6l4-9z" fill="#4c4f51" />
            <path d="M5 5l-3 9h2l3-9zM14 5l2 9h2l-3-9z" fill="#9ea2a4" />
          </Svg>
        </button>
        <button type="button" aria-label="Find options" className="flex w-[18px] items-center justify-center border-l border-[#a9aead]"><Caret /></button>
      </div>
      <span className="ml-[2px] h-8 w-px bg-[#a9aead]" />
    </div>
    <div className="relative mt-[2px] mr-[21px] ml-[119px] h-7 w-[217px]">
      <select aria-label="Selection filter" className="h-full w-full appearance-none border border-[#a3abaa] bg-[#f9fafa] pl-2 text-[14px] outline-none">
        <option>Geometry</option>
        <option>Feature</option>
      </select>
      <span className="pointer-events-none absolute inset-y-px right-px flex w-[19px] items-center justify-center border-l border-[#a3abaa]"><Caret /></span>
    </div>
  </footer>
);

const App: React.FC = () => {
  return (
    <div className="flex min-h-screen flex-col bg-[#e8e9ed] font-['Open_Sans','Noto_Sans',sans-serif] text-[14px] text-[#484b4d]">
      <TitleBar />
      <TabBar />
      <Ribbon />
      <div className="flex flex-1">
        <ModelTree />
        <main className="flex min-w-0 flex-1 flex-col items-center overflow-hidden">
          <ViewToolbar />
          <SheetModel />
        </main>
      </div>
      <StatusBar />
    </div>
  );
};

export default App;
